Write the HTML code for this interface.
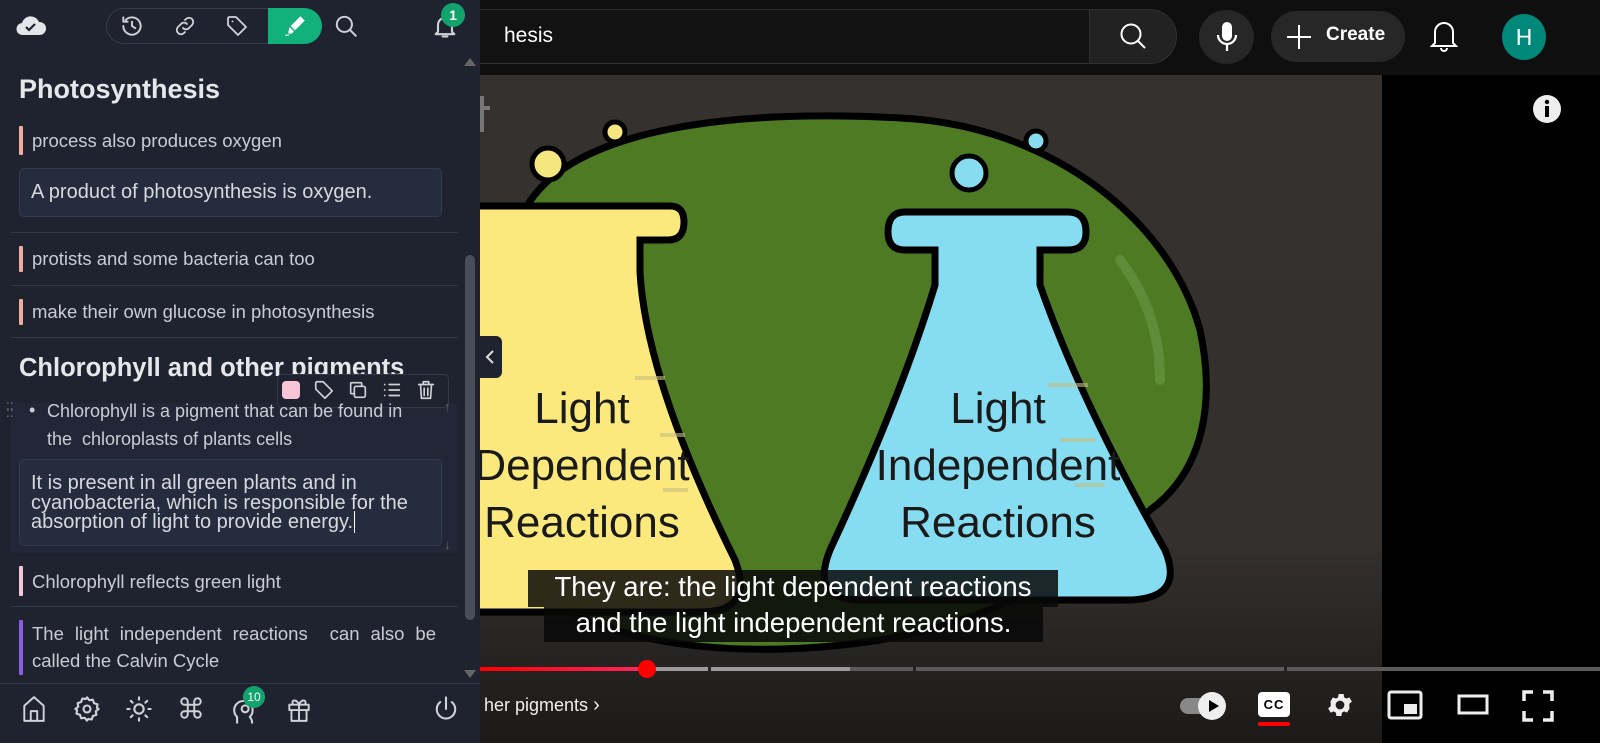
<!DOCTYPE html>
<html><head><meta charset="utf-8"><style>
*{margin:0;padding:0;box-sizing:border-box}
body{width:1600px;height:743px;overflow:hidden;background:#0f0f0f;font-family:"Liberation Sans",sans-serif;position:relative}
.abs{position:absolute}
#side{left:0;top:0;width:480px;height:743px;background:#1f2330;color:#d4d6dc}
.hl{position:absolute;left:19px;width:4px;background:#f2aa9a;border-radius:1px}
.txt{position:absolute;left:32px;font-size:18.5px;color:#c9ccd3;white-space:nowrap}
.sep{position:absolute;left:11px;width:447px;height:1px;background:#323847}
.box{position:absolute;left:19px;width:423px;background:#252c3e;border:1px solid #323a4e;border-radius:5px;color:#d7d9df}
h2{position:absolute;left:19px;font-size:27px;font-weight:bold;color:#e6e7ea;white-space:nowrap}
.ic{stroke:#d0d2d8;fill:none;stroke-width:1.8;stroke-linecap:round;stroke-linejoin:round}
</style></head><body>

<!-- YouTube header -->
<div class="abs" style="left:480px;top:0;width:1120px;height:75px;background:#0f0f0f"></div>
<div class="abs" style="left:470px;top:9px;width:620px;height:55px;background:#121212;border:1px solid #303030;border-right:none;border-radius:0"></div>
<div class="abs" style="left:1089px;top:9px;width:88px;height:55px;background:#222;border:1px solid #303030;border-radius:0 28px 28px 0"></div>
<svg class="abs" style="left:1118px;top:21px" width="30" height="30" viewBox="0 0 30 30"><circle cx="13" cy="13" r="9.5" stroke="#fff" stroke-width="2" fill="none"/><line x1="20" y1="20" x2="27" y2="27" stroke="#fff" stroke-width="2"/></svg>
<div class="abs" style="left:504px;top:24px;font-size:21px;color:#fff">hesis</div>
<div class="abs" style="left:1199px;top:10px;width:55px;height:54px;background:#272727;border-radius:50%"></div>
<svg class="abs" style="left:1214px;top:20px" width="26" height="34" viewBox="0 0 26 34"><rect x="8" y="2" width="10" height="19" rx="5" fill="#fff"/><path d="M4 15a9 9 0 0 0 18 0M13 24v7" stroke="#fff" stroke-width="2.2" fill="none"/></svg>
<div class="abs" style="left:1271px;top:11px;width:134px;height:51px;background:#272727;border-radius:26px"></div>
<svg class="abs" style="left:1286px;top:24px" width="26" height="26"><path d="M13 1v24M1 13h24" stroke="#fff" stroke-width="2"/></svg>
<div class="abs" style="left:1326px;top:24px;font-size:19px;font-weight:bold;color:#fff">Create</div>
<svg class="abs" style="left:1430px;top:18px" width="28" height="34" viewBox="0 0 28 34"><path d="M5 25V14a9 9 0 0 1 18 0v11l3 3H2z" stroke="#fff" stroke-width="2" fill="none"/><path d="M11 30a3 3 0 0 0 6 0" stroke="#fff" stroke-width="2" fill="none"/></svg>
<div class="abs" style="left:1502px;top:14px;width:44px;height:46px;border-radius:50%;background:#00897b;color:#fff;font-size:23px;text-align:center;line-height:46px">H</div>

<!-- video -->
<div class="abs" style="left:480px;top:75px;width:902px;height:668px;background:linear-gradient(#35312f 0%,#33302e 70%,#1c1a19 100%)"></div>
<div class="abs" style="left:1382px;top:75px;width:218px;height:668px;background:#000"></div>
<svg class="abs" style="left:1532px;top:94px" width="30" height="30"><circle cx="15" cy="15" r="14" fill="#eee"/><rect x="13" y="12" width="4" height="11" fill="#000"/><circle cx="15" cy="8" r="2.2" fill="#000"/></svg>
<svg class="abs" style="left:480px;top:75px" width="902" height="600" viewBox="480 75 902 600">
<path d="M482 96v36M476 108h14" stroke="#777" stroke-width="4"/>
<path d="M520 220 C560 120 760 110 900 118 C1050 125 1170 220 1200 330 C1215 400 1205 470 1150 510 C1100 560 1000 620 880 640 C720 665 560 640 510 560 C480 480 490 300 520 220Z" fill="#4d7a22" stroke="#000" stroke-width="7"/>
<path d="M1120 260 C1150 300 1160 340 1160 380" stroke="#5f8c38" stroke-width="10" fill="none" stroke-linecap="round"/>
<circle cx="548" cy="164" r="16" fill="#f6e680" stroke="#000" stroke-width="5"/>
<circle cx="615" cy="132" r="10" fill="#f6e680" stroke="#000" stroke-width="5"/>
<circle cx="969" cy="173" r="17" fill="#87dcf0" stroke="#000" stroke-width="5"/>
<circle cx="1036" cy="141" r="10" fill="#87dcf0" stroke="#000" stroke-width="5"/>
<path d="M470 206 H670 Q684 206 684 222 Q684 240 668 240 H640 V272 Q646 380 735 560 Q755 612 700 612 H470Z" fill="#fbe97d" stroke="#000" stroke-width="7"/>
<path d="M905 212 H1068 Q1086 212 1086 232 Q1086 250 1068 250 H1040 V285 Q1080 400 1165 550 Q1185 598 1130 600 H860 Q810 600 830 550 Q900 400 935 285 V250 H905 Q888 250 888 232 Q888 212 905 212Z" fill="#86dcf0" stroke="#000" stroke-width="7"/>
<path d="M635 378h30M660 435h25M663 490h25M1048 385h40M1060 440h35M1075 485h30" stroke="#c8c080" stroke-width="4" opacity=".6"/>
<g font-family="Liberation Sans,sans-serif" font-size="44" fill="#1a1a1a" text-anchor="middle">
<text x="582" y="423">Light</text><text x="582" y="480">Dependent</text><text x="582" y="537">Reactions</text>
<text x="998" y="423">Light</text><text x="998" y="480">Independent</text><text x="998" y="537">Reactions</text>
</g>
</svg>
<div class="abs" style="left:528px;top:570px;width:530px;height:37px;background:rgba(8,8,8,.85)"></div>
<div class="abs" style="left:544px;top:607px;width:499px;height:35px;background:rgba(8,8,8,.85)"></div>
<div class="abs" style="left:508px;top:571px;width:570px;text-align:center;font-size:27.5px;color:#fff;white-space:nowrap">They are: the light dependent reactions</div>
<div class="abs" style="left:524px;top:607px;width:539px;text-align:center;font-size:27.5px;color:#fff;white-space:nowrap">and the light independent reactions.</div>
<!-- progress -->
<div class="abs" style="left:480px;top:667px;width:1120px;height:4px;background:#5a5a5a"></div>
<div class="abs" style="left:647px;top:667px;width:203px;height:4px;background:#9a9a9a"></div>
<div class="abs" style="left:708px;top:667px;width:3px;height:4px;background:#222"></div>
<div class="abs" style="left:913px;top:667px;width:3px;height:4px;background:#222"></div>
<div class="abs" style="left:1284px;top:667px;width:3px;height:4px;background:#222"></div>
<div class="abs" style="left:480px;top:667px;width:167px;height:4px;background:linear-gradient(90deg,#f00 0%,#ff2760 100%)"></div>
<div class="abs" style="left:638px;top:660px;width:18px;height:18px;border-radius:50%;background:#f00"></div>
<div class="abs" style="left:484px;top:694px;font-size:18px;color:#eee">her pigments <span style="font-size:20px">›</span></div>
<div class="abs" style="left:1180px;top:698px;width:36px;height:16px;border-radius:8px;background:#888"></div>
<div class="abs" style="left:1198px;top:692px;width:28px;height:28px;border-radius:50%;background:#eee"></div>
<svg class="abs" style="left:1205px;top:698px" width="16" height="16"><path d="M4 2l10 6-10 6z" fill="#000"/></svg>
<div class="abs" style="left:1258px;top:692px;width:32px;height:25px;border-radius:4px;background:#fff;color:#000;font-weight:bold;font-size:13px;text-align:center;line-height:25px;letter-spacing:1px">CC</div>
<div class="abs" style="left:1258px;top:722px;width:32px;height:4px;border-radius:2px;background:#f00"></div>
<svg class="abs" style="left:1325px;top:690px" width="30" height="30" viewBox="0 0 24 24"><path fill="#eee" d="M19.4 13a7.5 7.5 0 0 0 0-2l2.1-1.6-2-3.5-2.5 1a7 7 0 0 0-1.7-1l-.4-2.7h-4l-.4 2.7a7 7 0 0 0-1.7 1l-2.5-1-2 3.5L4.6 11a7.5 7.5 0 0 0 0 2l-2.1 1.6 2 3.5 2.5-1a7 7 0 0 0 1.7 1l.4 2.7h4l.4-2.7a7 7 0 0 0 1.7-1l2.5 1 2-3.5zM12 15.5a3.5 3.5 0 1 1 0-7 3.5 3.5 0 0 1 0 7z"/></svg>
<svg class="abs" style="left:1387px;top:690px" width="36" height="30"><rect x="2" y="2" width="32" height="26" rx="2" stroke="#eee" stroke-width="3" fill="none"/><rect x="17" y="14" width="13" height="10" fill="#eee"/></svg>
<svg class="abs" style="left:1457px;top:694px" width="32" height="22"><rect x="2" y="2" width="28" height="17" stroke="#eee" stroke-width="3" fill="none"/></svg>
<svg class="abs" style="left:1522px;top:690px" width="32" height="32"><path d="M2 11V2h9M21 2h9v9M30 21v9h-9M11 30H2v-9" stroke="#eee" stroke-width="3.5" fill="none"/></svg>

<!-- sidebar -->
<div id="side" class="abs">
<svg class="abs" style="left:15px;top:14px" width="32" height="22" viewBox="0 0 32 22"><path d="M8 21a6 6 0 0 1-1-12A9 9 0 0 1 24 8a6.5 6.5 0 0 1 1 13z" fill="#e4e5e8"/><path d="M11 13l3 3 6-6" stroke="#1f2330" stroke-width="2.2" fill="none"/></svg>
<div class="abs" style="left:106px;top:8px;width:216px;height:36px;border:1px solid #353b4b;border-radius:18px"></div>
<div class="abs" style="left:268px;top:8px;width:54px;height:36px;background:#12b07a;border-radius:0 18px 18px 0"></div>
<svg class="abs" style="left:119px;top:13px" width="26" height="26" viewBox="0 0 24 24"><path class="ic" d="M4 12a8 8 0 1 0 2.3-5.6M4 4v4h4M12 8v4l3 2"/></svg>
<svg class="abs" style="left:173px;top:14px" width="24" height="24" viewBox="0 0 24 24"><path class="ic" d="M10 14a4 4 0 0 0 6 0l3-3a4 4 0 0 0-6-6l-1 1M14 10a4 4 0 0 0-6 0l-3 3a4 4 0 0 0 6 6l1-1"/></svg>
<svg class="abs" style="left:225px;top:14px" width="24" height="24" viewBox="0 0 24 24"><path class="ic" d="M3 4v7l10 10 8-8L11 3H4zM7.5 7.5h.1"/></svg>
<svg class="abs" style="left:282px;top:13px" width="26" height="26" viewBox="0 0 24 24"><path fill="#fff" d="M17 3l4 4-9 9-4-4zM7 13l4 4-2 2H6v-2zM3 20h4l-1 1H3z"/></svg>
<svg class="abs" style="left:333px;top:13px" width="26" height="26" viewBox="0 0 24 24"><circle cx="10.5" cy="10.5" r="7" class="ic"/><path class="ic" d="M16 16l5 5"/></svg>
<svg class="abs" style="left:431px;top:12px" width="28" height="28" viewBox="0 0 24 24"><path class="ic" d="M6 17V11a6 6 0 0 1 12 0v6l2 2H4zM10 21h4"/></svg>
<div class="abs" style="left:441px;top:3px;width:24px;height:24px;border-radius:50%;background:#12a36d;color:#fff;font-size:14px;font-weight:bold;text-align:center;line-height:24px">1</div>
<div class="abs" style="left:464px;top:58px;width:0;height:0;border-left:6px solid transparent;border-right:6px solid transparent;border-bottom:8px solid #666"></div>
<div class="abs" style="left:465px;top:255px;width:10px;height:365px;background:#4a4e58;border-radius:5px"></div>
<div class="abs" style="left:464px;top:670px;width:0;height:0;border-left:6px solid transparent;border-right:6px solid transparent;border-top:8px solid #666"></div>

<h2 style="top:74px">Photosynthesis</h2>
<div class="hl" style="top:126px;height:29px"></div><div class="txt" style="top:130px">process also produces oxygen</div>
<div class="box" style="top:168px;height:49px;font-size:20px;padding:12px 11px;white-space:nowrap">A product of photosynthesis is oxygen.</div>
<div class="sep" style="top:232px"></div>
<div class="hl" style="top:246px;height:26px"></div><div class="txt" style="top:248px">protists and some bacteria can too</div>
<div class="sep" style="top:285px"></div>
<div class="hl" style="top:299px;height:26px"></div><div class="txt" style="top:301px">make their own glucose in photosynthesis</div>
<div class="sep" style="top:337px"></div>
<h2 style="top:354px;font-size:25.5px">Chlorophyll and other pigments</h2>
<div class="abs" style="left:11px;top:403px;width:447px;height:150px;background:#222737"></div>
<div class="abs" style="left:277px;top:374px;width:172px;height:34px;background:#1f2330;border:1px solid #323847;border-radius:5px"></div>
<div class="abs" style="left:282px;top:381px;width:18px;height:18px;background:#f7c4d8;border-radius:4px"></div>
<svg class="abs" style="left:313px;top:379px" width="22" height="22" viewBox="0 0 24 24"><path class="ic" d="M3 4v7l10 10 8-8L11 3H4z"/></svg>
<svg class="abs" style="left:347px;top:379px" width="22" height="22" viewBox="0 0 24 24"><rect class="ic" x="8" y="8" width="12" height="12" rx="2"/><path class="ic" d="M16 8V5a1 1 0 0 0-1-1H5a1 1 0 0 0-1 1v10a1 1 0 0 0 1 1h3"/></svg>
<svg class="abs" style="left:381px;top:379px" width="22" height="22" viewBox="0 0 24 24"><path class="ic" d="M9 6h11M9 12h11M9 18h11M4 6h.1M4 12h.1M4 18h.1"/></svg>
<svg class="abs" style="left:415px;top:379px" width="22" height="22" viewBox="0 0 24 24"><path class="ic" d="M4 6h16M9 6V3h6v3M6 6l1 15h10l1-15M10 10v8M14 10v8"/></svg>
<div class="abs" style="left:6px;top:404px;color:#777;font-size:12px;line-height:6px">⁚⁚<br>⁚⁚</div>
<div class="abs" style="left:29px;top:400px;font-size:18px;color:#c9ccd3">•</div>
<div class="abs" style="left:47px;top:397px;font-size:18px;line-height:28px;color:#c9ccd3;white-space:nowrap">Chlorophyll is a pigment that can be found in<br>the&nbsp; chloroplasts of plants cells</div>
<div class="abs" style="left:444px;top:399px;color:#666;font-size:13px">↑</div>
<div class="abs" style="left:444px;top:537px;color:#666;font-size:13px">↓</div>
<div class="box" style="top:459px;height:87px;font-size:20px;line-height:19.5px;padding:14px 11px 0;white-space:nowrap">It is present in all green plants and in<br>cyanobacteria, which is responsible for the<br>absorption of light to provide energy.<span style="border-left:1.5px solid #fff;margin-left:1px"></span></div>
<div class="hl" style="top:566px;height:30px;background:#f7c4d8"></div><div class="txt" style="top:571px">Chlorophyll reflects green light</div>
<div class="sep" style="top:606px"></div>
<div class="hl" style="top:620px;height:55px;background:#8a5ee0"></div>
<div class="txt" style="top:623px;width:404px;text-align:justify;text-align-last:justify">The light independent reactions&nbsp; can also be</div>
<div class="txt" style="top:650px">called the Calvin Cycle</div>
<div class="abs" style="left:0;top:683px;width:480px;height:1px;background:#323847"></div>
<svg class="abs" style="left:21px;top:695px" width="26" height="28" viewBox="0 0 24 26"><path class="ic" d="M3 24V10l9-8 9 8v14zM9 24v-9h6v9"/></svg>
<svg class="abs" style="left:73px;top:695px" width="28" height="28" viewBox="0 0 24 24"><path class="ic" d="M12 2l2 2.5 3-.5 1 3 3 1-.5 3L22 12l-2.5 2 .5 3-3 1-1 3-3-.5L12 22l-2-2.5-3 .5-1-3-3-1 .5-3L2 12l2.5-2L4 7l3-1 1-3 3 .5z"/><circle class="ic" cx="12" cy="12" r="3"/></svg>
<svg class="abs" style="left:125px;top:695px" width="28" height="28" viewBox="0 0 24 24"><circle class="ic" cx="12" cy="12" r="4"/><path class="ic" d="M12 2v2M12 20v2M2 12h2M20 12h2M5 5l1.5 1.5M17.5 17.5L19 19M5 19l1.5-1.5M17.5 6.5L19 5"/></svg>
<svg class="abs" style="left:178px;top:695px" width="26" height="26" viewBox="0 0 24 24"><path class="ic" d="M9 9V6a3 3 0 1 0-3 3h12a3 3 0 1 0-3-3v12a3 3 0 1 0 3-3H6a3 3 0 1 0 3 3z"/></svg>
<svg class="abs" style="left:230px;top:695px" width="28" height="30" viewBox="0 0 24 26"><path class="ic" d="M6 24v-5a8 8 0 1 1 11 0c1 1 2 3 2 5"/><circle class="ic" cx="13" cy="12" r="3"/></svg>
<div class="abs" style="left:243px;top:686px;width:22px;height:22px;border-radius:50%;background:#12a36d;color:#fff;font-size:12px;text-align:center;line-height:22px">10</div>
<svg class="abs" style="left:286px;top:695px" width="26" height="28" viewBox="0 0 24 26"><path class="ic" d="M3 9h18v5H3zM5 14v10h14V14M12 9v15M12 9c-2-5-7-5-6-1 0 1 3 1 6 1 3 0 6 0 6-1 1-4-4-4-6 1"/></svg>
<svg class="abs" style="left:432px;top:694px" width="28" height="30" viewBox="0 0 24 26"><path class="ic" d="M12 3v10M7 7a8 8 0 1 0 10 0"/></svg>
</div>
<div class="abs" style="left:478px;top:336px;width:24px;height:42px;background:#1f2330;border-radius:0 6px 6px 0"></div>
<svg class="abs" style="left:483px;top:349px" width="14" height="16"><path d="M10 2L4 8l6 6" stroke="#ddd" stroke-width="2" fill="none"/></svg>
</body></html>
